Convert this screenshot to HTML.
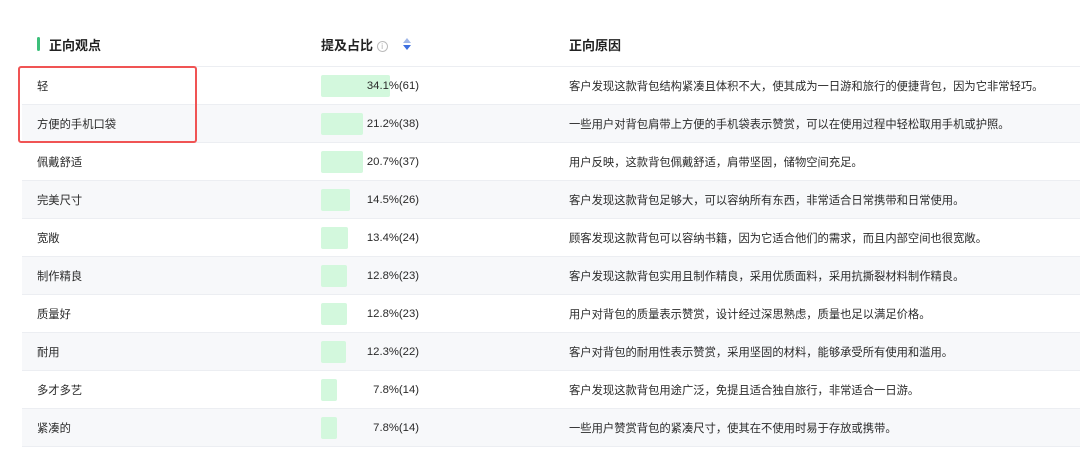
<!DOCTYPE html>
<html><head><meta charset="utf-8"><style>
*{margin:0;padding:0;box-sizing:border-box}
body{width:1080px;height:450px;background:#fff;font-family:"Liberation Sans","Noto Sans CJK SC",sans-serif;color:#2a2a2a;overflow:hidden;position:relative}
.hdr{position:absolute;top:0;left:22px;right:0;height:67px;border-bottom:1px solid #eceef2;font-size:13px;font-weight:bold;color:#222}
.hdr span{position:absolute;top:35px}
.mark{position:absolute;left:15px;top:37px;width:3px;height:14px;background:#3cbf7a;border-radius:2px}
.row{position:absolute;left:22px;right:0;height:38px;border-bottom:1px solid #eceef2;font-size:11.3px}
.row.g{background:#f7f8fa}
.row span{position:absolute;top:11px;white-space:nowrap}
.bar{position:absolute;left:299px;top:8px;height:22px;background:#d3f8dd;border-radius:2px}
.row span.pct{width:120px;left:277px;text-align:right;top:13px}
.box{position:absolute;left:18px;top:66px;width:179px;height:77px;border:2px solid #f05454;border-radius:3px}
</style></head><body>
<div class="hdr"><div class="mark"></div><span style="left:27px">正向观点</span><span style="left:299px">提及占比 <span style="position:static;font-weight:normal;color:#aaa;border:1px solid #bbb;border-radius:50%;display:inline-block;width:11px;height:11px;line-height:9px;text-align:center;font-size:8px;vertical-align:1px">i</span></span>
<svg style="position:absolute;left:381px;top:38px" width="8" height="12"><path d="M4 0L8 5H0Z" fill="#9fb6e8"/><path d="M4 12L8 7H0Z" fill="#3d6fe0"/></svg>
<span style="left:547px">正向原因</span></div>
<div class="row" style="top:67px"><span style="left:15px">轻</span><div class="bar" style="width:69px"></div><span class="pct">34.1%(61)</span><span style="left:547px">客户发现这款背包结构紧凑且体积不大，使其成为一日游和旅行的便捷背包，因为它非常轻巧。</span></div>
<div class="row g" style="top:105px"><span style="left:15px">方便的手机口袋</span><div class="bar" style="width:42px"></div><span class="pct">21.2%(38)</span><span style="left:547px">一些用户对背包肩带上方便的手机袋表示赞赏，可以在使用过程中轻松取用手机或护照。</span></div>
<div class="row" style="top:143px"><span style="left:15px">佩戴舒适</span><div class="bar" style="width:42px"></div><span class="pct">20.7%(37)</span><span style="left:547px">用户反映，这款背包佩戴舒适，肩带坚固，储物空间充足。</span></div>
<div class="row g" style="top:181px"><span style="left:15px">完美尺寸</span><div class="bar" style="width:29px"></div><span class="pct">14.5%(26)</span><span style="left:547px">客户发现这款背包足够大，可以容纳所有东西，非常适合日常携带和日常使用。</span></div>
<div class="row" style="top:219px"><span style="left:15px">宽敞</span><div class="bar" style="width:27px"></div><span class="pct">13.4%(24)</span><span style="left:547px">顾客发现这款背包可以容纳书籍，因为它适合他们的需求，而且内部空间也很宽敞。</span></div>
<div class="row g" style="top:257px"><span style="left:15px">制作精良</span><div class="bar" style="width:26px"></div><span class="pct">12.8%(23)</span><span style="left:547px">客户发现这款背包实用且制作精良，采用优质面料，采用抗撕裂材料制作精良。</span></div>
<div class="row" style="top:295px"><span style="left:15px">质量好</span><div class="bar" style="width:26px"></div><span class="pct">12.8%(23)</span><span style="left:547px">用户对背包的质量表示赞赏，设计经过深思熟虑，质量也足以满足价格。</span></div>
<div class="row g" style="top:333px"><span style="left:15px">耐用</span><div class="bar" style="width:25px"></div><span class="pct">12.3%(22)</span><span style="left:547px">客户对背包的耐用性表示赞赏，采用坚固的材料，能够承受所有使用和滥用。</span></div>
<div class="row" style="top:371px"><span style="left:15px">多才多艺</span><div class="bar" style="width:16px"></div><span class="pct">7.8%(14)</span><span style="left:547px">客户发现这款背包用途广泛，免提且适合独自旅行，非常适合一日游。</span></div>
<div class="row g" style="top:409px"><span style="left:15px">紧凑的</span><div class="bar" style="width:16px"></div><span class="pct">7.8%(14)</span><span style="left:547px">一些用户赞赏背包的紧凑尺寸，使其在不使用时易于存放或携带。</span></div>
<div class="box"></div>
</body></html>
